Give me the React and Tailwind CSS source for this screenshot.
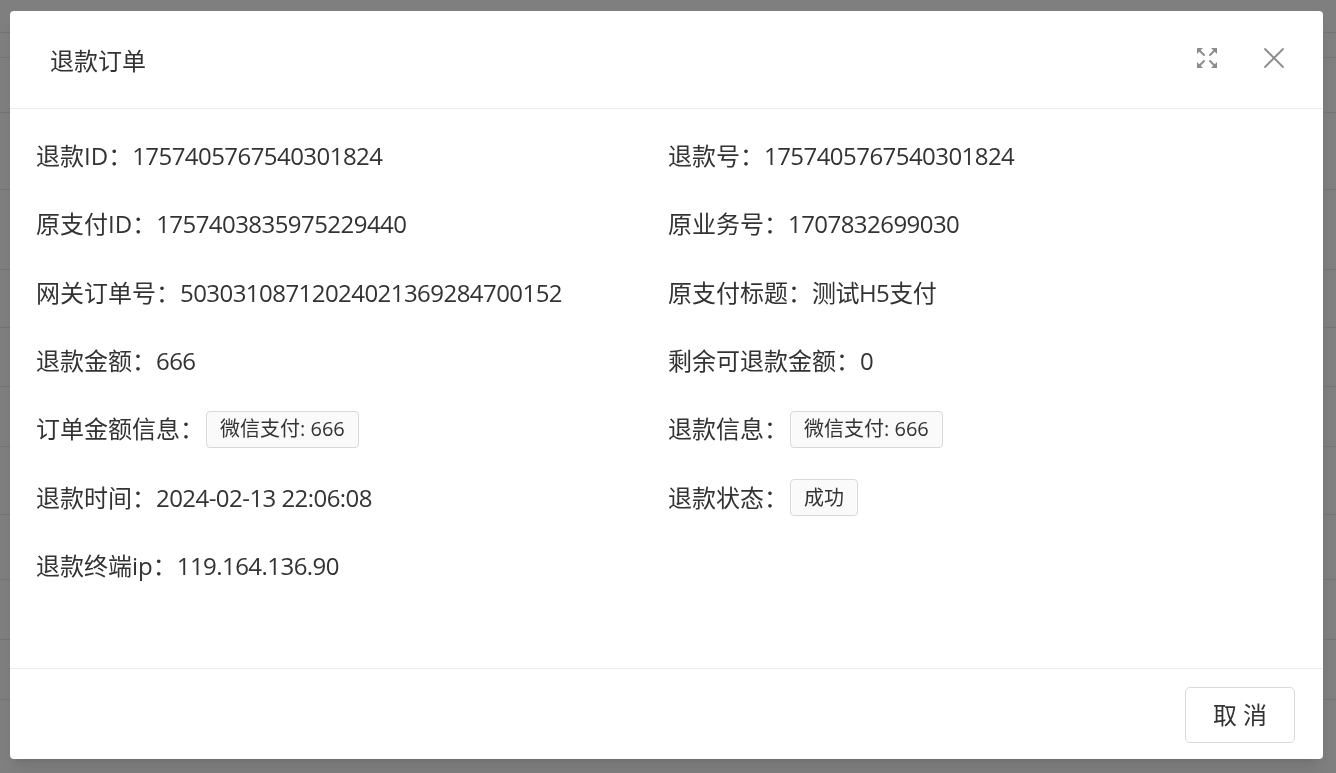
import React from "react";

const rows = [
  [
    { label: "退款ID", value: "1757405767540301824" },
    { label: "退款号", value: "1757405767540301824" },
  ],
  [
    { label: "原支付ID", value: "1757403835975229440" },
    { label: "原业务号", value: "1707832699030" },
  ],
  [
    { label: "网关订单号", value: "50303108712024021369284700152" },
    { label: "原支付标题", value: "测试H5支付" },
  ],
  [
    { label: "退款金额", value: "666" },
    { label: "剩余可退款金额", value: "0" },
  ],
  [
    { label: "订单金额信息", tag: "微信支付: 666" },
    { label: "退款信息", tag: "微信支付: 666" },
  ],
  [
    { label: "退款时间", value: "2024-02-13 22:06:08" },
    { label: "退款状态", tag: "成功" },
  ],
  [{ label: "退款终端ip", value: "119.164.136.90" }, null],
];

function FullscreenIcon() {
  return (
    <svg width="24" height="24" viewBox="0 0 24 24" fill="none">
      <g stroke="#8c8c8c" strokeWidth="2" strokeLinecap="round">
        <line x1="4" y1="4" x2="9" y2="9" />
        <line x1="20" y1="4" x2="15" y2="9" />
        <line x1="4" y1="20" x2="9" y2="15" />
        <line x1="20" y1="20" x2="15" y2="15" />
      </g>
      <g fill="#8c8c8c">
        <polygon points="2,2 8,2 2,8" />
        <polygon points="22,2 16,2 22,8" />
        <polygon points="2,22 8,22 2,16" />
        <polygon points="22,22 16,22 22,16" />
      </g>
    </svg>
  );
}

function CloseIcon() {
  return (
    <svg width="22" height="22" viewBox="0 0 22 22" fill="none">
      <g stroke="#8c8c8c" strokeWidth="1.8" strokeLinecap="round">
        <line x1="2" y1="2" x2="20" y2="20" />
        <line x1="20" y1="2" x2="2" y2="20" />
      </g>
    </svg>
  );
}

function Item({ item }) {
  if (!item) return <div />;
  return (
    <div className="flex h-[68.33px] items-center text-[#333]">
      <span className="text-[24px] leading-[36px] whitespace-nowrap">
        {item.label}：
      </span>
      {item.tag ? (
        <span className="ml-[2px] inline-flex h-[37px] items-center rounded-[4px] border border-[#d9d9d9] bg-[#fafafa] px-[13px] text-[20px] text-[#333]">
          {item.tag}
        </span>
      ) : (
        <span className="text-[24px] leading-[36px] tracking-[-0.55px] whitespace-nowrap">
          {item.value}
        </span>
      )}
    </div>
  );
}

export default function App() {
  const bgLines = [33, 58, 113, 190, 270, 328, 387, 447, 515, 580, 640, 700];
  return (
    <div className="relative h-[773px] w-full overflow-hidden bg-white font-['Open_Sans','Noto_Sans_CJK_SC',sans-serif]">
      {/* page behind the mask */}
      <div className="flex flex-col">
        {bgLines.map((y, i) => (
          <div
            key={i}
            className="border-b border-[#e6e6e6]"
            style={{ height: i === 0 ? y : y - bgLines[i - 1] }}
          />
        ))}
      </div>

      <div className="fixed inset-0 bg-black/50 pl-[10px] pt-[11px]">
        <div className="flex h-[748px] w-[1313px] flex-col rounded-[4px] bg-white shadow-lg">
          {/* header */}
          <div className="flex h-[98px] items-center border-b border-[#ececec] pl-[40px] pr-[38px] pt-[2px]">
            <h2 className="flex-1 text-[24px] text-[#333]">退款订单</h2>
            <div className="flex items-center gap-[44px] -mt-[6px]">
              <FullscreenIcon />
              <CloseIcon />
            </div>
          </div>

          {/* body */}
          <div className="flex-1 px-[26px] pt-[13px]">
            <div className="grid grid-cols-[632px_1fr]">
              {rows.map((r, i) => (
                <React.Fragment key={i}>
                  <Item item={r[0]} />
                  <Item item={r[1]} />
                </React.Fragment>
              ))}
            </div>
          </div>

          {/* footer */}
          <div className="flex justify-end border-t border-[#ececec] pr-[28px] pt-[18px] pb-[16px]">
            <button className="h-[56px] w-[110px] rounded-[5px] border border-[#d9d9d9] bg-white text-[24px] text-[#333]">
              取 消
            </button>
          </div>
        </div>
      </div>
    </div>
  );
}
